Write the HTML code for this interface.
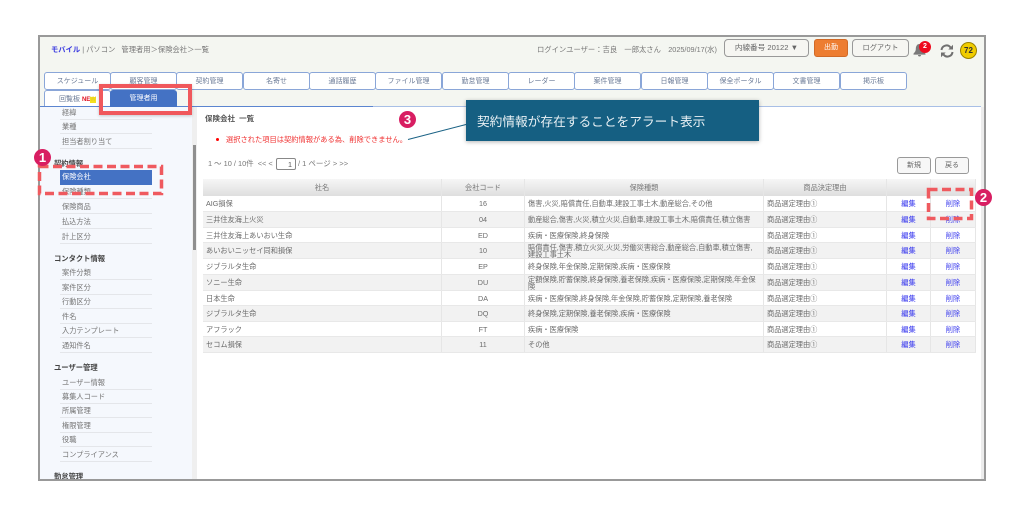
<!DOCTYPE html>
<html lang="ja"><head><meta charset="utf-8"><style>
html,body{margin:0;padding:0;background:#fff}
#p{position:relative;width:1024px;height:510px;overflow:hidden;background:#fff;font-family:"Liberation Sans","Noto Sans CJK JP",sans-serif;font-size:7px;color:#666;line-height:1;filter:blur(.3px)}
#p div{position:absolute;box-sizing:border-box}
.t{white-space:nowrap}
.tab{height:18px;background:#fff;border:1px solid #8aa6d8;border-radius:3px;text-align:center;line-height:17px;color:#6a7a96;font-size:7px}
.si{width:92px;height:14.6px;border-bottom:1px solid #e4e6ea;line-height:16px;padding-left:2px;font-size:7.2px;color:#757575;white-space:nowrap}
.sh{font-size:7.3px;font-weight:700;color:#444;white-space:nowrap;margin-top:1px}
.row{left:203px;width:773px;border-bottom:1px solid #e8e8e8}
.c{top:0;bottom:0;display:flex;align-items:center;font-size:7.2px;color:#6a6a6a;line-height:7.5px;border-right:1px solid #e6e6e6;overflow:hidden;padding-top:1px}
.c1{left:0;width:239px;padding-left:3px}
.c2{left:239px;width:83px;justify-content:center}
.c3{left:322px;width:239px;padding-left:3px}
.c4{left:561px;width:123px;padding-left:3px}
.c5{left:684px;width:44px;justify-content:center;color:#3333ee}
.c6{left:728px;width:45px;justify-content:center;color:#3f3fee}
.btn{background:#f7f7f7;border:1px solid #999;border-radius:3px;text-align:center;font-size:7px;color:#666}
.num{width:17px;height:17px;border-radius:50%;background:#d81e62;color:#fff;font-weight:700;font-size:13px;text-align:center;line-height:17px}
</style></head><body><div id="p">

<div style="left:38px;top:35px;width:948px;height:446px;border:2px solid #999;background:#f4f6f1"></div>

<!-- header -->
<div class="t" style="left:51px;top:46px;font-size:7.3px;color:#777"><span style="color:#3a3ae0;font-weight:700">モバイル</span> | パソコン&nbsp;&nbsp; 管理者用＞保険会社＞一覧</div>
<div class="t" style="left:537px;top:46px;font-size:7.3px;color:#777">ログインユーザー：吉良　一郎太さん　2025/09/17(水)</div>
<div class="btn" style="left:724px;top:39px;width:85px;height:18px;line-height:16px;font-size:7.6px;background:#f6f6f2;border-radius:4px">内線番号 20122 ▼</div>
<div style="left:814px;top:39px;width:34px;height:18px;background:#ed7d31;border:1px solid #d06a28;border-radius:3px;color:#fff;text-align:center;line-height:16px;font-size:7px">出勤</div>
<div class="btn" style="left:852px;top:39px;width:57px;height:18px;line-height:16px;font-size:7.2px;background:#f6f6f2;border-radius:4px">ログアウト</div>
<svg style="position:absolute;left:912px;top:43px" width="15" height="15" viewBox="0 0 15 15"><path d="M7.5 1C4.800 1 3.800 3.500 3.800 6c0 2.300-1.300 3.600-2.300 4.600v1h12v-1c-1-1-2.300-2.300-2.300-4.600 0-2.500-1-5-3.700-5z" fill="#7a7a7a"/><path d="M6 12h3a1.500 1.500 0 0 1-3 0z" fill="#7a7a7a"/></svg>
<div style="left:919px;top:41px;width:12px;height:12px;border-radius:50%;background:#ee0a1e;color:#fff;font-size:7px;font-weight:700;text-align:center;line-height:12px">2</div>
<svg style="position:absolute;left:940px;top:44px" width="14" height="14" viewBox="0 0 14 14" fill="none" stroke="#707070" stroke-width="2"><path d="M1.500 6a5 5 0 0 1 9-2.500"/><path d="M12.500 8a5 5 0 0 1-9 2.500"/><path d="M13 .8v4.700H8.300z" fill="#707070" stroke="none"/><path d="M1 13.200V8.500h4.700z" fill="#707070" stroke="none"/></svg>
<div style="left:960px;top:42px;width:17px;height:17px;border-radius:50%;background:#f0cc00;border:1px solid #998200;color:#333;font-size:8px;font-weight:700;text-align:center;line-height:15px">72</div>

<!-- tabs -->
<div class="tab" style="left:44px;top:72px;width:67px">スケジュール</div>
<div class="tab" style="left:110px;top:72px;width:67px">顧客管理</div>
<div class="tab" style="left:176px;top:72px;width:67px">契約管理</div>
<div class="tab" style="left:243px;top:72px;width:67px">名寄せ</div>
<div class="tab" style="left:309px;top:72px;width:67px">通話履歴</div>
<div class="tab" style="left:375px;top:72px;width:67px">ファイル管理</div>
<div class="tab" style="left:442px;top:72px;width:67px">勤怠管理</div>
<div class="tab" style="left:508px;top:72px;width:67px">レーダー</div>
<div class="tab" style="left:574px;top:72px;width:67px">案件管理</div>
<div class="tab" style="left:641px;top:72px;width:67px">日報管理</div>
<div class="tab" style="left:707px;top:72px;width:67px">保全ポータル</div>
<div class="tab" style="left:773px;top:72px;width:67px">文書管理</div>
<div class="tab" style="left:840px;top:72px;width:67px">掲示板</div>
<div class="tab" style="left:44px;top:90px;width:67px;height:17px;text-align:left;padding-left:14px;border-bottom:0;border-radius:3px 3px 0 0">回覧板 <span style="color:#e01020;font-size:6px;font-weight:700">NE</span><span style="background:#f4e020;font-size:6px;color:#e8d020;font-weight:700">W</span></div>

<!-- lines and panels -->
<div style="left:40px;top:107px;width:152px;height:372px;background:#f5f8fd"></div>
<div style="left:192px;top:107px;width:5px;height:372px;background:#efefef"></div>
<div style="left:193px;top:145px;width:3px;height:105px;background:#8f8f8f"></div>
<div style="left:197px;top:107px;width:784px;height:372px;background:#fff"></div>
<div style="left:981px;top:107px;width:3px;height:372px;background:#ececec"></div>
<div style="left:40px;top:106px;width:941px;height:1px;background:#a8bfe6"></div>
<div style="left:40px;top:105.500px;width:333px;height:1.500px;background:#5b85d0"></div>
<div style="left:110px;top:90px;width:67px;height:17px;background:#4472c4;border-radius:3px 3px 0 0;color:#fff;text-align:center;line-height:17px;font-size:7px">管理者用</div>

<!-- sidebar -->
<div style="left:40px;top:107px;width:152px;height:372px;overflow:hidden">
<div class="si" style="left:20px;top:-2px">経緯</div>
<div class="si" style="left:20px;top:12px">業種</div>
<div class="si" style="left:20px;top:27px">担当者割り当て</div>
<div class="sh" style="left:14px;top:52px">契約情報</div>
<div class="si" style="left:20px;top:63px;background:#4472c4;color:#fff;border:0;line-height:14px">保険会社</div>
<div class="si" style="left:20px;top:77px">保険種類</div>
<div class="si" style="left:20px;top:92px">保険商品</div>
<div class="si" style="left:20px;top:107px">払込方法</div>
<div class="si" style="left:20px;top:122px">計上区分</div>
<div class="sh" style="left:14px;top:147px">コンタクト情報</div>
<div class="si" style="left:20px;top:158px">案件分類</div>
<div class="si" style="left:20px;top:173px">案件区分</div>
<div class="si" style="left:20px;top:187px">行動区分</div>
<div class="si" style="left:20px;top:202px">件名</div>
<div class="si" style="left:20px;top:216px">入力テンプレート</div>
<div class="si" style="left:20px;top:231px">通知件名</div>
<div class="sh" style="left:14px;top:256px">ユーザー管理</div>
<div class="si" style="left:20px;top:268px">ユーザー情報</div>
<div class="si" style="left:20px;top:282px">募集人コード</div>
<div class="si" style="left:20px;top:296px">所属管理</div>
<div class="si" style="left:20px;top:311px">権限管理</div>
<div class="si" style="left:20px;top:325px">役職</div>
<div class="si" style="left:20px;top:340px">コンプライアンス</div>
<div class="sh" style="left:14px;top:365px">勤怠管理</div>
</div>

<!-- content -->
<div class="t" style="left:205px;top:115px;font-size:7.5px;font-weight:700;color:#555">保険会社&nbsp; 一覧</div>
<div style="left:216px;top:138px;width:3px;height:3px;border-radius:50%;background:#f00"></div>
<div class="t" style="left:226px;top:136px;font-size:7.25px;color:#f03030">選択された項目は契約情報がある為、削除できません。</div>
<div class="t" style="left:208px;top:160px;font-size:7.4px;color:#777">1 〜 10 / 10件&nbsp; &lt;&lt; &lt;</div>
<div style="left:276px;top:158px;width:20px;height:12px;border:1px solid #888;border-radius:2px;text-align:right;padding-right:3px;line-height:11px;font-size:7.2px;color:#555;background:#fff">1</div>
<div class="t" style="left:298px;top:160px;font-size:7.5px;color:#777">/ 1 ページ &gt; &gt;&gt;</div>
<div class="btn" style="left:897px;top:157px;width:34px;height:17px;line-height:15px">新規</div>
<div class="btn" style="left:935px;top:157px;width:34px;height:17px;line-height:15px">戻る</div>

<!-- table -->
<div style="left:203px;top:179px;width:773px;height:17px;background:linear-gradient(#f6f6f6,#dedede)">
<div class="c c1" style="justify-content:center;padding:1px 0 0;color:#777">社名</div><div class="c c2" style="color:#777">会社コード</div><div class="c c3" style="justify-content:center;padding:1px 0 0;color:#777">保険種類</div><div class="c c4" style="justify-content:center;padding:1px 0 0;color:#777">商品決定理由</div><div class="c c5"></div><div class="c c6"></div></div>

<div class="row" style="top:196px;height:16px;background:#fff"><div class="c c1">AIG損保</div><div class="c c2">16</div><div class="c c3">傷害,火災,賠償責任,自動車,建設工事土木,動産総合,その他</div><div class="c c4">商品選定理由①</div><div class="c c5">編集</div><div class="c c6">削除</div></div>
<div class="row" style="top:212px;height:16px;background:#f2f2f2"><div class="c c1">三井住友海上火災</div><div class="c c2">04</div><div class="c c3">動産総合,傷害,火災,積立火災,自動車,建設工事土木,賠償責任,積立傷害</div><div class="c c4">商品選定理由①</div><div class="c c5">編集</div><div class="c c6">削除</div></div>
<div class="row" style="top:228px;height:15px;background:#fff"><div class="c c1">三井住友海上あいおい生命</div><div class="c c2">ED</div><div class="c c3">疾病・医療保険,終身保険</div><div class="c c4">商品選定理由①</div><div class="c c5">編集</div><div class="c c6">削除</div></div>
<div class="row" style="top:243px;height:16px;background:#f2f2f2"><div class="c c1">あいおいニッセイ同和損保</div><div class="c c2">10</div><div class="c c3"><span>賠償責任,傷害,積立火災,火災,労働災害総合,動産総合,自動車,積立傷害,<br>建設工事土木</span></div><div class="c c4">商品選定理由①</div><div class="c c5">編集</div><div class="c c6">削除</div></div>
<div class="row" style="top:259px;height:16px;background:#fff"><div class="c c1">ジブラルタ生命</div><div class="c c2">EP</div><div class="c c3">終身保険,年金保険,定期保険,疾病・医療保険</div><div class="c c4">商品選定理由①</div><div class="c c5">編集</div><div class="c c6">削除</div></div>
<div class="row" style="top:275px;height:16px;background:#f2f2f2"><div class="c c1">ソニー生命</div><div class="c c2">DU</div><div class="c c3"><span>定額保険,貯蓄保険,終身保険,養老保険,疾病・医療保険,定期保険,年金保<br>険</span></div><div class="c c4">商品選定理由①</div><div class="c c5">編集</div><div class="c c6">削除</div></div>
<div class="row" style="top:291px;height:15px;background:#fff"><div class="c c1">日本生命</div><div class="c c2">DA</div><div class="c c3">疾病・医療保険,終身保険,年金保険,貯蓄保険,定期保険,養老保険</div><div class="c c4">商品選定理由①</div><div class="c c5">編集</div><div class="c c6">削除</div></div>
<div class="row" style="top:306px;height:16px;background:#f2f2f2"><div class="c c1">ジブラルタ生命</div><div class="c c2">DQ</div><div class="c c3">終身保険,定期保険,養老保険,疾病・医療保険</div><div class="c c4">商品選定理由①</div><div class="c c5">編集</div><div class="c c6">削除</div></div>
<div class="row" style="top:322px;height:15px;background:#fff"><div class="c c1">アフラック</div><div class="c c2">FT</div><div class="c c3">疾病・医療保険</div><div class="c c4">商品選定理由①</div><div class="c c5">編集</div><div class="c c6">削除</div></div>
<div class="row" style="top:337px;height:16px;background:#f2f2f2"><div class="c c1">セコム損保</div><div class="c c2">11</div><div class="c c3">その他</div><div class="c c4">商品選定理由①</div><div class="c c5">編集</div><div class="c c6">削除</div></div>

<!-- annotations -->
<div style="left:99px;top:84px;width:93px;height:31px;border:4px solid #f0585c;box-shadow:0 1px 3px rgba(0,0,0,.2)"></div>
<svg style="position:absolute;left:0;top:0" width="1024" height="510" fill="none" stroke="#ef5a5f" stroke-width="3.5" stroke-dasharray="9 4.500">
<rect x="39.500" y="166.500" width="122" height="27"/>
<rect x="928.500" y="189.500" width="43" height="29"/>
<path d="M408 139.500L466 124.500" stroke="#1a6285" stroke-width="1" stroke-dasharray="none"/>
</svg>
<div class="num" style="left:34px;top:149px">1</div>
<div class="num" style="left:975px;top:189px">2</div>
<div class="num" style="left:399px;top:111px">3</div>
<div class="t" style="left:466px;top:100px;width:293px;height:41px;background:#155f82;color:#e8f0f4;font-size:12.7px;line-height:44px;padding-left:11px;box-shadow:0 1px 4px rgba(0,0,0,.3)">契約情報が存在することをアラート表示</div>
</div></body></html>
